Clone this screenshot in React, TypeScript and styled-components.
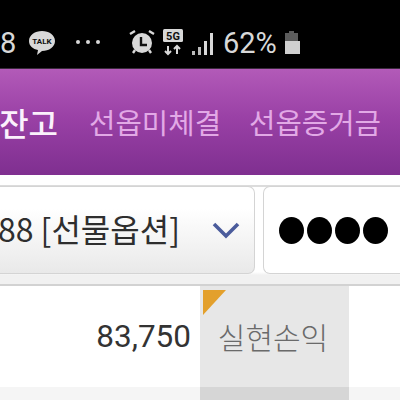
import styled, { createGlobalStyle } from "styled-components";

const GlobalStyle = createGlobalStyle`
  html, body {
    margin: 0;
    padding: 0;
    width: 400px;
    height: 400px;
    overflow: hidden;
    background: #fff;
    font-family: "Noto Sans CJK KR", "Roboto", sans-serif;
  }
`;

const Page = styled.div`
  width: 400px;
  height: 400px;
  overflow: hidden;
  display: flex;
  flex-direction: column;
`;

const StatusBar = styled.div`
  height: 69px;
  flex: none;
  background: #000;
  border-bottom: 1px solid #3a2a3c;
  box-sizing: border-box;
  display: flex;
  align-items: flex-start;
  padding-top: 28px;
  color: #d8d8d8;
  font-family: "Roboto", sans-serif;
`;

const Clock = styled.span`
  width: 13px;
  font-size: 29px;
  line-height: 30px;
  margin-right: 15px;
`;

const StatusIcon = styled.svg<{ $gap: number }>`
  flex: none;
  display: block;
  margin-right: ${(p) => p.$gap}px;
`;

const Percent = styled.span`
  font-size: 29px;
  line-height: 30px;
  margin-right: 6px;
`;

const TabBar = styled.div`
  height: 106px;
  flex: none;
  display: flex;
  justify-content: flex-end;
  align-items: center;
  gap: 28px;
  padding-right: 19px;
  box-sizing: border-box;
  white-space: nowrap;
  background: linear-gradient(#b25ab8 0%, #9a41a6 45%, #7f2f90 100%);
`;

const Tab = styled.span<{ $active?: boolean }>`
  flex: none;
  margin-top: -1px;
  margin-right: ${(p) => (p.$active ? 3 : 0)}px;
  font-size: ${(p) => (p.$active ? 32 : 28.7)}px;
  font-weight: ${(p) => (p.$active ? 500 : 400)};
  color: ${(p) => (p.$active ? "#fbf1fc" : "#e2a9e6")};
`;

const SelectRow = styled.div`
  height: 109px;
  flex: none;
  box-sizing: border-box;
  display: flex;
  gap: 8px;
  padding-top: 11px;
  background: linear-gradient(#fff 0, #fff 10px, #dcdcdc 10px, #dcdcdc 12px, #fff 12px, #fff 97px, #f1f1f1 100px);
`;

const Select = styled.div`
  width: 255px;
  height: 88px;
  flex: none;
  box-sizing: border-box;
  display: flex;
  justify-content: flex-end;
  align-items: center;
  padding-right: 14px;
  gap: 32px;
  border: 1px solid #d4d4d4;
  border-left: none;
  border-radius: 0 7px 7px 0;
  background: linear-gradient(#fff 25%, #e9e9e9 100%);
  white-space: nowrap;
`;

const SelectText = styled.span`
  flex: none;
  font-size: 32px;
  color: #2e2e2e;
  margin-top: -4px;
`;

const Chevron = styled.svg`
  flex: none;
  display: block;
`;

const PasswordBox = styled.div`
  flex: 1;
  height: 88px;
  box-sizing: border-box;
  display: flex;
  align-items: center;
  padding-left: 15px;
  border: 1px solid #d4d4d4;
  border-right: none;
  border-radius: 7px 0 0 7px;
  background: #fff;
`;

const Dot = styled.span`
  width: 25px;
  height: 27px;
  margin-right: 3px;
  border-radius: 50%;
  background: #000;
`;

const ResultRow = styled.div`
  height: 103px;
  flex: none;
  display: flex;
  border-top: 2px solid #d2d2d2;
  box-sizing: border-box;
  background: #fff;
`;

const Value = styled.div`
  width: 191px;
  margin-right: 9px;
  text-align: right;
  font-family: "Roboto", sans-serif;
  font-size: 31.5px;
  line-height: 102px;
  color: #333;
`;

const LabelCell = styled.div`
  position: relative;
  width: 149px;
  box-sizing: border-box;
  padding: 0 3px 2px 0;
  display: flex;
  justify-content: center;
  align-items: center;
  background: #e7e7e7;
  font-size: 30px;
  font-weight: 300;
  color: #6a6a6a;
`;

const Corner = styled.svg`
  position: absolute;
  left: 3px;
  top: 4px;
`;

const NextRow = styled.div`
  flex: 1;
  display: flex;
  background: #f5f5f5;
`;

const NextCell = styled.div`
  width: 149px;
  margin-left: 200px;
  background: #d6d6d6;
`;

const App = () => {
  return (
    <Page>
      <GlobalStyle />
      <StatusBar>
        <Clock>8</Clock>
        <StatusIcon $gap={17} width="28" height="28" viewBox="0 0 28 28">
          <path d="M14 3c7 0 13 4 13 10s-6 10-13 10l-5 4 1-5C5 21 1 18 1 13 1 7 7 3 14 3z" fill="#d8d8d8" />
          <text x="14" y="16" fontSize="8" fontWeight="700" textAnchor="middle" fill="#111" fontFamily="Roboto">TALK</text>
        </StatusIcon>
        <StatusIcon $gap={26} width="30" height="28" viewBox="0 0 30 28">
          <circle cx="5" cy="14" r="2" fill="#d8d8d8" />
          <circle cx="15" cy="14" r="2" fill="#d8d8d8" />
          <circle cx="25" cy="14" r="2" fill="#d8d8d8" />
        </StatusIcon>
        <StatusIcon $gap={7} width="26" height="28" viewBox="0 0 26 28">
          <circle cx="13" cy="15" r="10" fill="#d8d8d8" />
          <path d="M12 9v8h6" stroke="#111" strokeWidth="2.4" fill="none" />
          <path d="M1 6l5-3M25 6l-5-3" stroke="#d8d8d8" strokeWidth="2.4" />
          <path d="M4 25l2-3M22 25l-2-3" stroke="#d8d8d8" strokeWidth="2.4" />
        </StatusIcon>
        <StatusIcon $gap={8} width="22" height="28" viewBox="0 0 22 28">
          <rect x="1" y="1" width="20" height="13" rx="1.5" fill="#d8d8d8" />
          <text x="11" y="12" fontSize="11" fontWeight="700" textAnchor="middle" fill="#111" fontFamily="Roboto">5G</text>
          <path d="M6 18v8M3 23l3 3 3-3M15 26v-8M12 21l3-3 3 3" stroke="#d8d8d8" strokeWidth="2" fill="none" />
        </StatusIcon>
        <StatusIcon $gap={9} width="22" height="28" viewBox="0 0 22 28">
          <rect x="0" y="23" width="3" height="4" fill="#bbb" />
          <rect x="6" y="19" width="3" height="8" fill="#bbb" />
          <rect x="12" y="13" width="3" height="14" fill="#d8d8d8" />
          <rect x="18" y="5" width="3" height="22" fill="#d8d8d8" />
        </StatusIcon>
        <Percent>62%</Percent>
        <StatusIcon $gap={0} width="18" height="28" viewBox="0 0 18 28">
          <path d="M6 3h5v2h4v8H2V5h4z" fill="#5c5c5c" />
          <rect x="2" y="13" width="15" height="13" fill="#d0d0d0" />
        </StatusIcon>
      </StatusBar>
      <TabBar>
        <Tab $active>선옵잔고</Tab>
        <Tab>선옵미체결</Tab>
        <Tab>선옵증거금</Tab>
      </TabBar>
      <SelectRow>
        <Select>
          <SelectText>88 [선물옵션]</SelectText>
          <Chevron width="28" height="18" viewBox="0 0 28 18">
            <path d="M2 3l12 12L26 3" fill="none" stroke="#4b5c9c" strokeWidth="3.6" />
          </Chevron>
        </Select>
        <PasswordBox>
          <Dot />
          <Dot />
          <Dot />
          <Dot />
        </PasswordBox>
      </SelectRow>
      <ResultRow>
        <Value>83,750</Value>
        <LabelCell>
          <Corner width="23" height="25" viewBox="0 0 23 25">
            <path d="M0 0h23L0 25z" fill="#e3a02c" />
          </Corner>
          실현손익
        </LabelCell>
      </ResultRow>
      <NextRow>
        <NextCell />
      </NextRow>
    </Page>
  );
};

export default App;
